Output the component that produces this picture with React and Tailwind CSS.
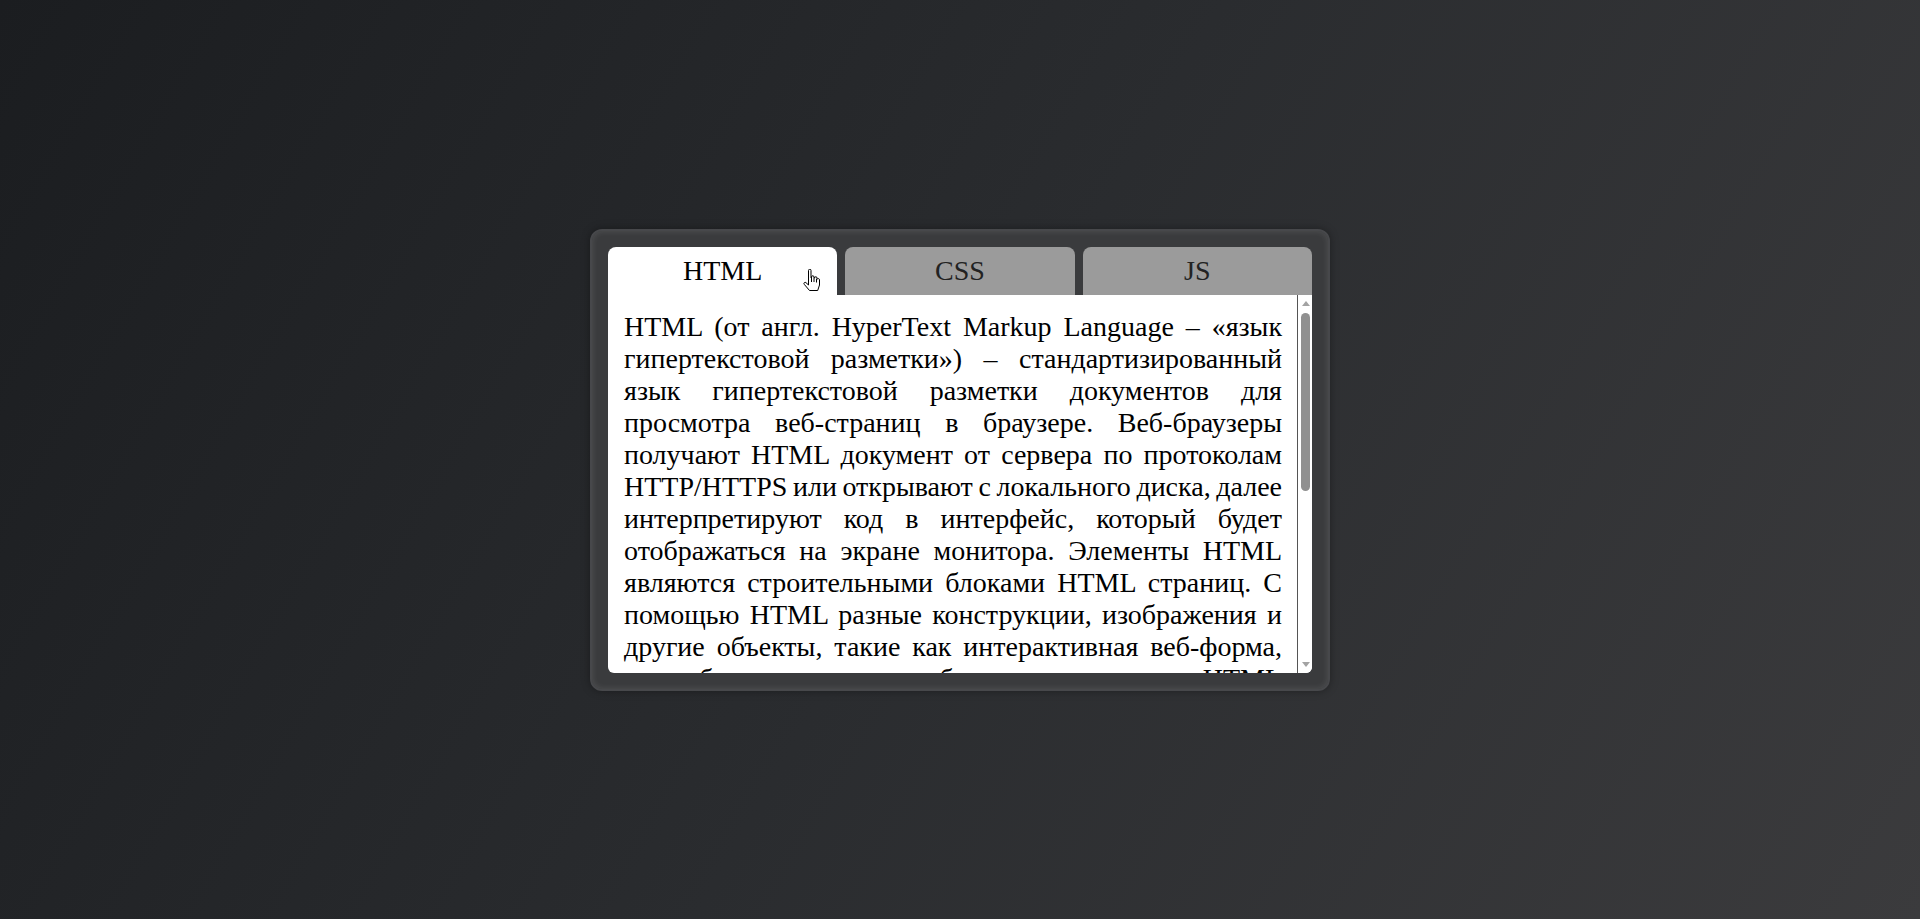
import React, { useState } from "react";

const tabs = [
  {
    id: "html",
    label: "HTML",
    text:
      "HTML (от англ. HyperText Markup Language – «язык гипертекстовой разметки») – стандартизированный язык гипертекстовой разметки документов для просмотра веб-страниц в браузере. Веб-браузеры получают HTML документ от сервера по протоколам HTTP/HTTPS или открывают с локального диска, далее интерпретируют код в интерфейс, который будет отображаться на экране монитора. Элементы HTML являются строительными блоками HTML страниц. С помощью HTML разные конструкции, изображения и другие объекты, такие как интерактивная веб-форма, могут быть встроены в отображаемую страницу. HTML предоставляет средства для создания заголовков, абзацев, списков, ссылок, цитат и других элементов. Элементы HTML выделяются тегами, записанными с использованием угловых скобок. Такие теги, как <img /> и <input />, напрямую вводят контент на страницу. Другие теги, такие как <p>, окружают и оформляют текст внутри себя и могут включать другие теги в качестве подэлементов. Браузеры не отображают HTML-теги, но используют их для интерпретации содержимого страницы.",
  },
  {
    id: "css",
    label: "CSS",
    text:
      "CSS (англ. Cascading Style Sheets – «каскадные таблицы стилей») – формальный язык описания внешнего вида документа (веб-страницы), написанного с использованием языка разметки (чаще всего HTML или XHTML).",
  },
  {
    id: "js",
    label: "JS",
    text:
      "JavaScript – мультипарадигменный язык программирования. Поддерживает объектно-ориентированный, императивный и функциональный стили. Является реализацией спецификации ECMAScript.",
  },
];

function HandCursor() {
  return (
    <svg
      width="18"
      height="24"
      viewBox="0 0 18 24"
      className="absolute right-[16px] top-[22px] pointer-events-none"
    >
      <path
        d="M5.5 1.5a1.25 1.25 0 0 1 2.5 0V9h0.5V8a1.25 1.25 0 0 1 2.5 0v1h0.5V9a1.25 1.25 0 0 1 2.5 0v1h0.3a1.25 1.25 0 0 1 2.2 0.8V16l-1.8 5.5H6.5L1.3 15.4a1.2 1.2 0 0 1 1.7-1.7L5.5 16V1.5Z"
        fill="#fff"
        stroke="#000"
        strokeWidth="1"
        strokeLinejoin="round"
      />
      <path d="M8.5 9v4M11 9v4M13.5 10v3.5" stroke="#000" strokeWidth="1" />
    </svg>
  );
}

// classic scrollbar look (the browser here hides native ones)
function Scrollbar() {
  return (
    <div className="w-[15px] shrink-0 flex flex-col border-l border-[#555] bg-white">
      <div className="h-[17px] flex items-center justify-center pl-[1px]">
        <div className="w-0 h-0 border-x-[4.5px] border-x-transparent border-b-[5px] border-b-[#a3a3a3]" />
      </div>
      <div className="flex-1 pl-[3px] pr-[2px] pt-[1px]">
        <div className="h-[178px] w-full rounded-full bg-[#909090]" />
      </div>
      <div className="h-[17px] flex items-center justify-center pl-[1px]">
        <div className="w-0 h-0 border-x-[4.5px] border-x-transparent border-t-[5px] border-t-[#a3a3a3]" />
      </div>
    </div>
  );
}

export default function App() {
  const [active, setActive] = useState("html");
  const current = tabs.find((t) => t.id === active);

  return (
    <div className="min-h-screen w-full flex items-center justify-center bg-[linear-gradient(120deg,#1b1d20_0%,#2a2c2f_50%,#3b3b3d_100%)] font-['Liberation_Serif',serif]">
      {/* panel */}
      <div className="w-[740px] rounded-[12px] border-2 border-[#47484b] bg-[#3a3b3d] p-[16px] shadow-[inset_0_0_6px_rgba(255,255,255,0.12),0_0_8px_rgba(0,0,0,0.35)]">
        <div className="flex gap-2">
          {tabs.map((t) => (
            <button
              key={t.id}
              onClick={() => setActive(t.id)}
              className={
                "relative flex-1 h-[48px] rounded-t-lg text-[28px] leading-[32px] " +
                (t.id === active
                  ? "bg-white text-black"
                  : "bg-[#9b9b9b] text-[#222]")
              }
            >
              {t.label}
              {t.id === "html" && <HandCursor />}
            </button>
          ))}
        </div>
        <div className="h-[378px] flex bg-white rounded-b-md overflow-hidden">
          <div className="flex-1 min-w-0 overflow-y-auto py-4 pl-4 pr-[15px] text-[28px] leading-[32px] [word-spacing:-3px] text-justify text-black">
            {current.text}
          </div>
          <Scrollbar />
        </div>
      </div>
    </div>
  );
}
